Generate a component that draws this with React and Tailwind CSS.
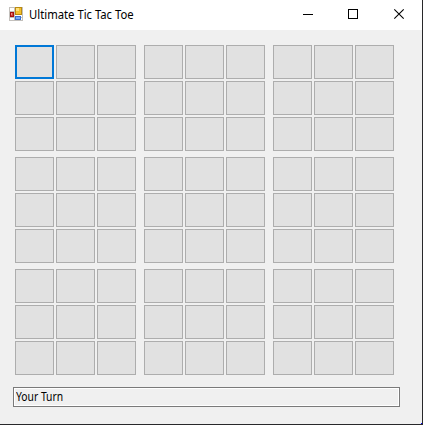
import React from "react";

function AppIcon() {
  return (
    <svg width="14" height="14" viewBox="0 0 14 14" shapeRendering="crispEdges">
      <rect x="0.5" y="0.5" width="13" height="13" fill="#fff" stroke="#c3c0bc" />
      <path d="M5.5 0V14M0 4.5H6M0 10.5H14" stroke="#c3c0bc" fill="none" />
      <rect x="1" y="5" width="4" height="5" fill="#a51212" />
      <rect x="2" y="6" width="2" height="3" fill="#d0453a" />
      <rect x="2" y="6" width="1" height="2" fill="#ef8a80" />
      <rect x="6" y="0" width="7" height="8" fill="#b98a12" />
      <rect x="7" y="1" width="5" height="6" fill="#f4c02c" />
      <rect x="7" y="1" width="3" height="3" fill="#ffe07a" />
      <rect x="6" y="9" width="6" height="4" fill="#3b70cf" />
      <rect x="7" y="10" width="4" height="2" fill="#79aaf5" />
    </svg>
  );
}

function TitleBar() {
  return (
    <header className="flex h-[30px] items-center bg-white pl-[9px]">
      <div className="-mt-0.5">
        <AppIcon />
      </div>
      <h1 className="ml-1.5 flex-1 origin-left scale-x-[0.94] whitespace-nowrap text-[12px] leading-[30px] text-black">
        Ultimate Tic Tac Toe
      </h1>
      <svg width="133" height="30" viewBox="0 0 133 30" fill="none" stroke="#000">
        <path d="M14 14.5H24" />
        <rect x="59.5" y="9.5" width="9" height="9" />
        <path d="M105.3 9.3L114.7 18.7M114.7 9.3L105.3 18.7" strokeWidth="1.1" />
      </svg>
    </header>
  );
}

const nine = Array.from({ length: 9 }, (_, i) => i);

function Board({ focused }) {
  return (
    <div className="grid grid-cols-[39px_39px_39px] gap-0.5">
      {nine.map((i) => (
        <button
          key={i}
          aria-label={`Cell ${i + 1}`}
          className={
            focused && i === 0
              ? "h-[34px] border-2 border-[#0078d7] bg-[#e1e1e1]"
              : "h-[34px] border border-[#adadad] bg-[#e1e1e1]"
          }
        />
      ))}
    </div>
  );
}

export default function App() {
  return (
    <div className="relative h-[425px] w-[423px] overflow-hidden border-r border-b border-[#28282a] bg-[#f0f0f0] font-['Noto_Sans','Open_Sans',sans-serif]">
      <TitleBar />
      <main className="pt-[15px]">
        <div className="ml-[15px] grid w-[379px] grid-cols-[121px_121px_121px] gap-x-2 gap-y-1.5">
          {nine.map((i) => (
            <Board key={i} focused={i === 0} />
          ))}
        </div>
        <div className="mt-3 ml-[13px] h-5 w-[387px] border border-[#7a7a7a] bg-white p-px">
          <div className="h-4 bg-[#f0f0f0] pl-px text-[12px] leading-4 text-black">
            <span className="inline-block origin-left scale-x-[0.86]">Your Turn</span>
          </div>
        </div>
      </main>
      <div className="absolute -right-px -bottom-px size-0.5 bg-[#0000ff]" />
    </div>
  );
}
